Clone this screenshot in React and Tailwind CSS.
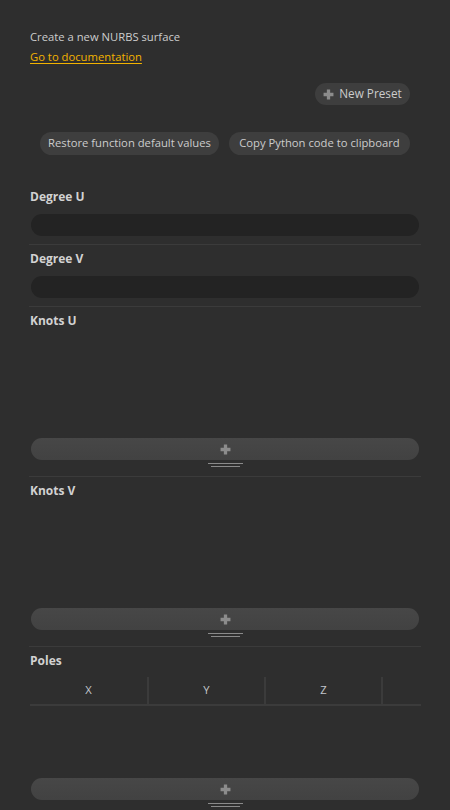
import React from 'react';

const PlusIcon = ({ className }) => (
  <svg className={className} viewBox="0 0 10 10" fill="currentColor">
    <path d="M3.5 0.5h3v3h3v3h-3v3h-3v-3h-3v-3h3z" />
  </svg>
);

const Separator = () => <div className="h-px bg-[#3b3b3b]" />;

const Label = ({ children }) => (
  <div className="h-[16px] pl-px text-[12px] font-bold leading-[16px] text-[#d2d2d2]">{children}</div>
);

const NumberField = () => (
  <div className="mx-[2px] mt-[9px] h-[22px] rounded-full bg-[#232323]" />
);

const AddBar = () => (
  <div className="px-[2px]">
    <button
      type="button"
      className="flex h-[22px] w-full items-center justify-center rounded-full bg-gradient-to-b from-[#474747] to-[#424242] text-[#8c8c8c]"
    >
      <PlusIcon className="h-[11px] w-[11px]" />
    </button>
    <div className="mt-[3px] flex flex-col items-center">
      <div className="h-px w-[35px] bg-[#8a8a8a]" />
      <div className="mt-[2px] h-px w-[29px] bg-[#8a8a8a]" />
    </div>
  </div>
);

const Pill = ({ children, className = '' }) => (
  <button
    type="button"
    className={`flex items-center justify-center rounded-full bg-[#3e3e3e] text-[#cccccc] ${className}`}
  >
    {children}
  </button>
);

export default function App() {
  return (
    <div className="min-h-[810px] bg-[#2e2e2e] font-['Open_Sans',sans-serif] text-[11.25px] text-[#cdcdcd]">
      <div className="px-[30px] pt-[27px] leading-[20px]">
        <div>Create a new NURBS surface</div>
        <a href="#" className="text-[#f3b300] underline underline-offset-2">
          Go to documentation
        </a>
      </div>

      <div className="mt-[16px] flex justify-end pr-[40px]">
        <Pill className="h-[22px] w-[95px] gap-[5px]">
          <PlusIcon className="h-[11px] w-[11px] text-[#8c8c8c]" />
          <span className="text-[11.75px]">New Preset</span>
        </Pill>
      </div>

      <div className="mt-[27px] flex justify-end gap-[10px] pr-[40px]">
        <Pill className="h-[23px] w-[179px]">Restore function default values</Pill>
        <Pill className="h-[23px] w-[181px]">Copy Python code to clipboard</Pill>
      </div>

      <div className="mt-[34px] px-[29px]">
        <Label>Degree U</Label>
        <NumberField />
        <div className="mt-[8px]" />
        <Separator />

        <div className="mt-[6px]" />
        <Label>Degree V</Label>
        <NumberField />
        <div className="mt-[8px]" />
        <Separator />

        <div className="mt-[6px]" />
        <Label>Knots U</Label>
        <div className="h-[109px]" />
        <AddBar />
        <div className="mt-[9px]" />
        <Separator />

        <div className="mt-[6px]" />
        <Label>Knots V</Label>
        <div className="h-[109px]" />
        <AddBar />
        <div className="mt-[9px]" />
        <Separator />

        <div className="mt-[6px]" />
        <Label>Poles</Label>
        <div className="ml-px mt-[8px] flex h-[29px] border-b-2 border-[#3b3b3b] text-[#c2c6cc]">
          <div className="flex w-[117px] items-center justify-center">X</div>
          <div className="w-[2px] bg-[#3b3b3b]" />
          <div className="flex w-[115px] items-center justify-center">Y</div>
          <div className="w-[2px] bg-[#3b3b3b]" />
          <div className="flex w-[115px] items-center justify-center">Z</div>
          <div className="w-[2px] bg-[#3b3b3b]" />
          <div className="flex-1" />
        </div>
        <div className="h-[72px]" />
        <AddBar />
      </div>
    </div>
  );
}
